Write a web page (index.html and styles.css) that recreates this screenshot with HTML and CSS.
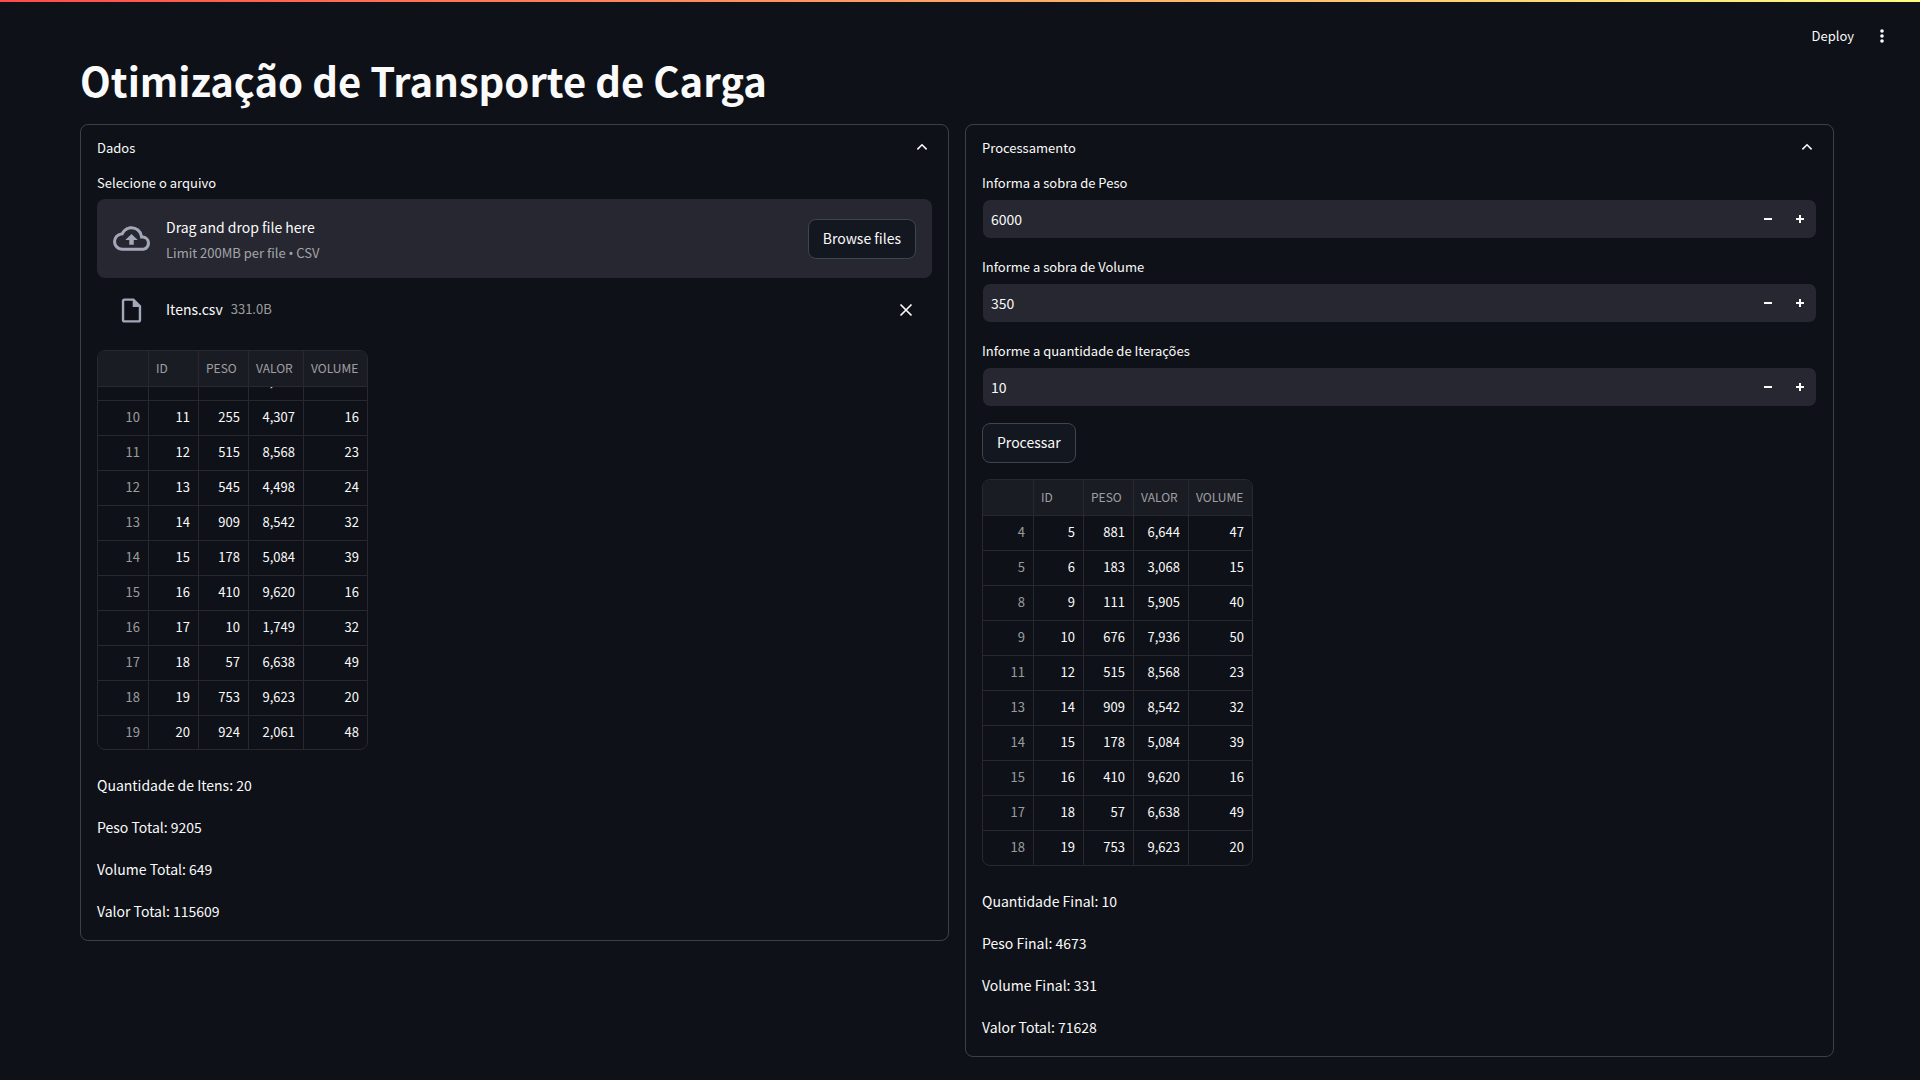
FILE: index.html
```html
<!DOCTYPE html>
<html lang="pt-BR">
<head>
<meta charset="utf-8">
<title>Otimização de Transporte de Carga</title>
<link rel="stylesheet" href="styles.css">
</head>
<body>
<header class="toolbar">
  <button class="plain deploy" type="button">Deploy</button>
  <button class="plain" type="button" aria-label="Menu">
    <svg width="20" height="20" viewBox="0 0 20 20" fill="currentColor"><circle cx="10" cy="5" r="1.8"/><circle cx="10" cy="10" r="1.8"/><circle cx="10" cy="15" r="1.8"/></svg>
  </button>
</header>
<main class="page">
  <h1>Otimização de Transporte de Carga</h1>
  <div class="columns">
    <details class="panel" open>
      <summary>Dados
        <svg width="20" height="20" viewBox="0 0 20 20" fill="none" stroke="currentColor" stroke-width="1.6"><path d="M5.400 11.400 10 6.800l4.600 4.600"/></svg>
      </summary>
      <div class="body">
        <label class="label" for="browse">Selecione o arquivo</label>
        <div class="dropzone">
          <svg class="lead" width="37" height="37" viewBox="0 0 24 24" fill="currentColor"><path d="M19.350 10.040A7.490 7.490 0 0 0 12 4C9.110 4 6.600 5.640 5.350 8.040A5.994 5.994 0 0 0 0 14c0 3.310 2.690 6 6 6h13c2.760 0 5-2.240 5-5 0-2.640-2.050-4.780-4.650-4.960zM19 18H6c-2.210 0-4-1.790-4-4 0-2.050 1.530-3.760 3.560-3.970l1.070-.11.5-.95A5.469 5.469 0 0 1 12 6c2.620 0 4.880 1.860 5.390 4.430l.3 1.500 1.530.11A2.980 2.980 0 0 1 22 15c0 1.650-1.350 3-3 3zM8 13h2.550v3h2.900v-3H16l-4-4z"/></svg>
          <div class="hint"><span>Drag and drop file here</span><small>Limit 200MB per file <span class="dot">•</span> CSV</small></div>
          <button class="btn" id="browse" type="button">Browse files</button>
        </div>
        <div class="file">
          <svg class="lead" width="29" height="29" viewBox="0 0 24 24" fill="currentColor"><path d="M14 2H6c-1.100 0-1.990.9-1.990 2L4 20c0 1.100.89 2 1.990 2H18c1.100 0 2-.9 2-2V8l-6-6zM6 20V4h7v5h5v11H6z"/></svg>
          <div class="name"><span>Itens.csv</span><small>331.0B</small></div>
          <button class="plain" type="button" aria-label="Remover arquivo"><svg width="20" height="20" viewBox="0 0 20 20" fill="none" stroke="currentColor" stroke-width="1.700"><path d="M4.500 4.500l11 11M15.500 4.500l-11 11"/></svg></button>
        </div>
        <div class="grid">
          <table>
            <thead><tr><th></th><th>ID</th><th>PESO</th><th>VALOR</th><th>VOLUME</th></tr></thead>
            <tbody>
              <tr class="cut"><th><div>9</div></th><td><div>10</div></td><td><div>676</div></td><td><div>7,936</div></td><td><div>50</div></td></tr>
              <tr><th>10</th><td>11</td><td>255</td><td>4,307</td><td>16</td></tr>
              <tr><th>11</th><td>12</td><td>515</td><td>8,568</td><td>23</td></tr>
              <tr><th>12</th><td>13</td><td>545</td><td>4,498</td><td>24</td></tr>
              <tr><th>13</th><td>14</td><td>909</td><td>8,542</td><td>32</td></tr>
              <tr><th>14</th><td>15</td><td>178</td><td>5,084</td><td>39</td></tr>
              <tr><th>15</th><td>16</td><td>410</td><td>9,620</td><td>16</td></tr>
              <tr><th>16</th><td>17</td><td>10</td><td>1,749</td><td>32</td></tr>
              <tr><th>17</th><td>18</td><td>57</td><td>6,638</td><td>49</td></tr>
              <tr><th>18</th><td>19</td><td>753</td><td>9,623</td><td>20</td></tr>
              <tr><th>19</th><td>20</td><td>924</td><td>2,061</td><td>48</td></tr>
            </tbody>
          </table>
        </div>
        <div class="stats">
          <p>Quantidade de Itens: 20</p>
          <p>Peso Total: 9205</p>
          <p>Volume Total: 649</p>
          <p>Valor Total: 115609</p>
        </div>
      </div>
    </details>
    <details class="panel" open>
      <summary>Processamento
        <svg width="20" height="20" viewBox="0 0 20 20" fill="none" stroke="currentColor" stroke-width="1.6"><path d="M5.400 11.400 10 6.800l4.600 4.600"/></svg>
      </summary>
      <div class="body">
        <div class="field">
          <label class="label" for="peso">Informa a sobra de Peso</label>
          <div class="number"><input id="peso" type="text" inputmode="numeric" value="6000"><button class="plain step" type="button" aria-label="Diminuir"><svg width="8" height="8" fill="currentColor"><path d="M0 3h8v2H0z"/></svg></button><button class="plain step" type="button" aria-label="Aumentar"><svg width="8" height="8" fill="currentColor"><path d="M0 3h3V0h2v3h3v2H5v3H3V5H0z"/></svg></button></div>
        </div>
        <div class="field">
          <label class="label" for="volume">Informe a sobra de Volume</label>
          <div class="number"><input id="volume" type="text" inputmode="numeric" value="350"><button class="plain step" type="button" aria-label="Diminuir"><svg width="8" height="8" fill="currentColor"><path d="M0 3h8v2H0z"/></svg></button><button class="plain step" type="button" aria-label="Aumentar"><svg width="8" height="8" fill="currentColor"><path d="M0 3h3V0h2v3h3v2H5v3H3V5H0z"/></svg></button></div>
        </div>
        <div class="field">
          <label class="label" for="iter">Informe a quantidade de Iterações</label>
          <div class="number"><input id="iter" type="text" inputmode="numeric" value="10"><button class="plain step" type="button" aria-label="Diminuir"><svg width="8" height="8" fill="currentColor"><path d="M0 3h8v2H0z"/></svg></button><button class="plain step" type="button" aria-label="Aumentar"><svg width="8" height="8" fill="currentColor"><path d="M0 3h3V0h2v3h3v2H5v3H3V5H0z"/></svg></button></div>
        </div>
        <button class="btn" type="button">Processar</button>
        <div class="grid">
          <table>
            <thead><tr><th></th><th>ID</th><th>PESO</th><th>VALOR</th><th>VOLUME</th></tr></thead>
            <tbody>
              <tr><th>4</th><td>5</td><td>881</td><td>6,644</td><td>47</td></tr>
              <tr><th>5</th><td>6</td><td>183</td><td>3,068</td><td>15</td></tr>
              <tr><th>8</th><td>9</td><td>111</td><td>5,905</td><td>40</td></tr>
              <tr><th>9</th><td>10</td><td>676</td><td>7,936</td><td>50</td></tr>
              <tr><th>11</th><td>12</td><td>515</td><td>8,568</td><td>23</td></tr>
              <tr><th>13</th><td>14</td><td>909</td><td>8,542</td><td>32</td></tr>
              <tr><th>14</th><td>15</td><td>178</td><td>5,084</td><td>39</td></tr>
              <tr><th>15</th><td>16</td><td>410</td><td>9,620</td><td>16</td></tr>
              <tr><th>17</th><td>18</td><td>57</td><td>6,638</td><td>49</td></tr>
              <tr><th>18</th><td>19</td><td>753</td><td>9,623</td><td>20</td></tr>
            </tbody>
          </table>
        </div>
        <div class="stats">
          <p>Quantidade Final: 10</p>
          <p>Peso Final: 4673</p>
          <p>Volume Final: 331</p>
          <p>Valor Total: 71628</p>
        </div>
      </div>
    </details>
  </div>
</main>
</body>
</html>
```
FILE: styles.css
```css
:root {
  --bg: #0e1117;
  --surface: #262730;
  --text: #fafafa;
  --muted: rgba(250, 250, 250, 0.6);
  --line: rgba(250, 250, 250, 0.2);
  --cell-line: #27292e;
}

* { box-sizing: border-box; }

body {
  margin: 0;
  background: linear-gradient(90deg, #ff4b4b, #fffd80) top / 100% 2px no-repeat var(--bg);
  color: var(--text);
  font: 14px/26px "Noto Sans CJK SC", "Noto Sans", sans-serif;
}

button, input { font: inherit; color: inherit; }

svg { display: block; flex: none; }

.plain {
  display: flex;
  align-items: center;
  justify-content: center;
  padding: 0;
  border: 0;
  background: none;
}

.toolbar {
  display: flex;
  align-items: center;
  justify-content: flex-end;
  gap: 18px;
  height: 56px;
  padding: 16px 28px 0;
}

.deploy { font-size: 13px; }

.page { padding: 0 86px 22px 80px; }

h1 {
  margin: 0 0 20px;
  font-size: 40px;
  font-weight: 700;
  line-height: 48px;
}

.columns {
  display: grid;
  grid-template-columns: 1fr 1fr;
  gap: 16px;
  align-items: start;
}

.panel {
  border: 1px solid var(--line);
  border-radius: 8px;
}

summary {
  display: flex;
  align-items: center;
  justify-content: space-between;
  height: 46px;
  padding: 0 16px;
  font-size: 13px;
  list-style: none;
}

.body { padding: 0 16px 16px; }

.label {
  display: block;
  margin-bottom: 4px;
  font-size: 13px;
  line-height: 24px;
}

.dropzone {
  display: flex;
  align-items: center;
  height: 79px;
  padding: 0 16px;
  border-radius: 8px;
  background: var(--surface);
}

.lead { color: #a3a8b8; }

.hint {
  display: flex;
  flex: 1;
  flex-direction: column;
  margin-left: 16px;
  padding-top: 2px;
}

small {
  color: var(--muted);
  font-size: 13px;
}

/* The CJK face draws a full-width bullet */
.dot { font-family: "Noto Sans", sans-serif; }

.btn {
  height: 40px;
  padding: 0 14px 2px;
  border: 1px solid #41444c;
  border-radius: 8px;
  background: #131720;
}

.file {
  display: flex;
  align-items: center;
  height: 64px;
  margin-bottom: 8px;
  padding: 0 16px 0 20px;
}

.name {
  display: flex;
  flex: 1;
  gap: 8px;
  margin-left: 20px;
  padding-bottom: 2px;
}

.grid {
  width: 271px;
  overflow: hidden;
  border: 1px solid var(--cell-line);
  border-radius: 8px;
}

table {
  width: 100%;
  border-collapse: separate;
  border-spacing: 0;
  table-layout: fixed;
  font-size: 13px;
}

th, td {
  height: 35px;
  padding: 0 8px 2px;
  border: solid var(--cell-line);
  border-width: 0 1px 1px 0;
  font-weight: 400;
  line-height: 30px;
  text-align: right;
}

th { color: var(--muted); }

th:first-child { width: 51px; }
th:nth-child(2), th:nth-child(3) { width: 50px; }
th:nth-child(4) { width: 55px; }

th:last-child, td:last-child { border-right: 0; }

tbody tr:last-child > * { height: 34px; border-bottom: 0; }

thead th {
  height: 36px;
  padding: 0 7px 2px;
  background: #1a1c24;
  font-size: 12px;
  text-align: left;
}

/* Row scrolled partly under the header */
.cut > * { height: 14px; padding-bottom: 0; }

.cut div {
  display: flex;
  align-items: flex-end;
  justify-content: flex-end;
  height: 13px;
  padding-bottom: 4px;
  overflow: hidden;
  line-height: 30px;
}

tbody .cut ~ tr:last-child > * { height: 33px; }

.stats {
  display: grid;
  gap: 16px;
  margin-top: 22px;
}

.stats p { margin: 0; }

.field { margin-bottom: 16px; }

.number {
  display: flex;
  height: 40px;
  overflow: hidden;
  border: 1px solid var(--bg);
  border-radius: 8px;
  background: var(--surface);
}

.number input {
  flex: 1;
  min-width: 0;
  padding: 0 8px;
  border: 0;
  background: none;
}

.step { width: 32px; }

.body > .btn { display: block; margin-bottom: 16px; }
```
